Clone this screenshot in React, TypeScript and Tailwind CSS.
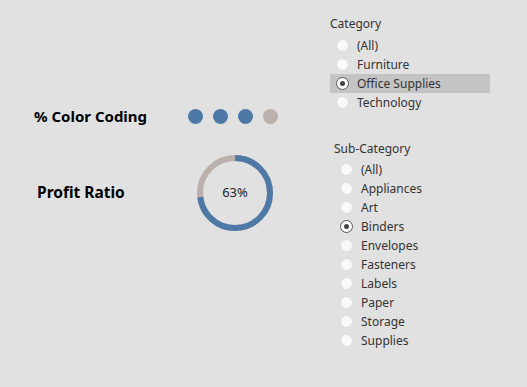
import React from "react";

const categories = ["(All)", "Furniture", "Office Supplies", "Technology"];
const subCategories = [
  "(All)",
  "Appliances",
  "Art",
  "Binders",
  "Envelopes",
  "Fasteners",
  "Labels",
  "Paper",
  "Storage",
  "Supplies",
];

function Radio({ checked }: { checked: boolean }) {
  return (
    <span
      className={
        checked
          ? "flex size-[13px] items-center justify-center rounded-full border border-[#555] bg-white"
          : "size-[13px] rounded-full border border-[#dcdcdc] bg-[#f9f9f9]"
      }
    >
      {checked && <span className="size-[5px] rounded-full bg-[#444]" />}
    </span>
  );
}

function FilterList({
  title,
  items,
  selected,
  highlight,
}: {
  title: string;
  items: string[];
  selected: string;
  highlight?: boolean;
}) {
  return (
    <div className="flex flex-col">
      <p className="h-4 text-[12px] leading-4 text-[#333]">{title}</p>
      <ul className={(highlight ? "mt-[4px]" : "mt-[3px]") + " flex flex-col"}>
        {items.map((item) => (
          <li
            key={item}
            className={
              "flex h-[19px] items-center gap-[8px] pl-[6px] text-[12px] text-[#333] " +
              (highlight && item === selected ? "bg-[#c4c4c4]" : "")
            }
          >
            <Radio checked={item === selected} />
            <span>{item}</span>
          </li>
        ))}
      </ul>
    </div>
  );
}

function Donut({ pct }: { pct: number }) {
  const r = 35;
  const c = 2 * Math.PI * r;
  return (
    <div className="relative size-[76px]">
      <svg width="76" height="76" viewBox="0 0 76 76" className="-rotate-90">
        <circle cx="38" cy="38" r={r} fill="none" stroke="#bab0ac" strokeWidth="6" />
        <circle
          cx="38"
          cy="38"
          r={r}
          fill="none"
          stroke="#4e79a7"
          strokeWidth="6"
          strokeDasharray={`${c * pct} ${c}`}
        />
      </svg>
      <span className="absolute inset-0 flex items-center justify-center text-[13px] text-[#222]">
        63%
      </span>
    </div>
  );
}

export default function App() {
  return (
    <main
      className="flex h-[387px] w-[527px] bg-[#e1e1e1]"
      style={{ fontFamily: '"Noto Sans", "Open Sans", sans-serif' }}
    >
      <section className="flex w-[330px] flex-col pt-[105px]">
        <div className="flex h-[22px] items-center pl-[34px]">
          <p className="w-[154px] text-[15px] font-bold text-black">% Color Coding</p>
          <div className="flex gap-[10px]">
            <span className="size-[15px] rounded-full bg-[#4e79a7]" />
            <span className="size-[15px] rounded-full bg-[#4e79a7]" />
            <span className="size-[15px] rounded-full bg-[#4e79a7]" />
            <span className="size-[15px] rounded-full bg-[#bab0ac]" />
          </div>
        </div>
        <div className="mt-[28px] flex items-center pl-[37px]">
          <p className="w-[160px] text-[15.5px] font-bold text-black">Profit Ratio</p>
          <Donut pct={0.73} />
        </div>
      </section>
      <section className="flex w-[160px] flex-col pt-[16px]">
        <FilterList title="Category" items={categories} selected="Office Supplies" highlight />
        <div className="mt-[29px] pl-[4px]">
          <FilterList title="Sub-Category" items={subCategories} selected="Binders" />
        </div>
      </section>
    </main>
  );
}
